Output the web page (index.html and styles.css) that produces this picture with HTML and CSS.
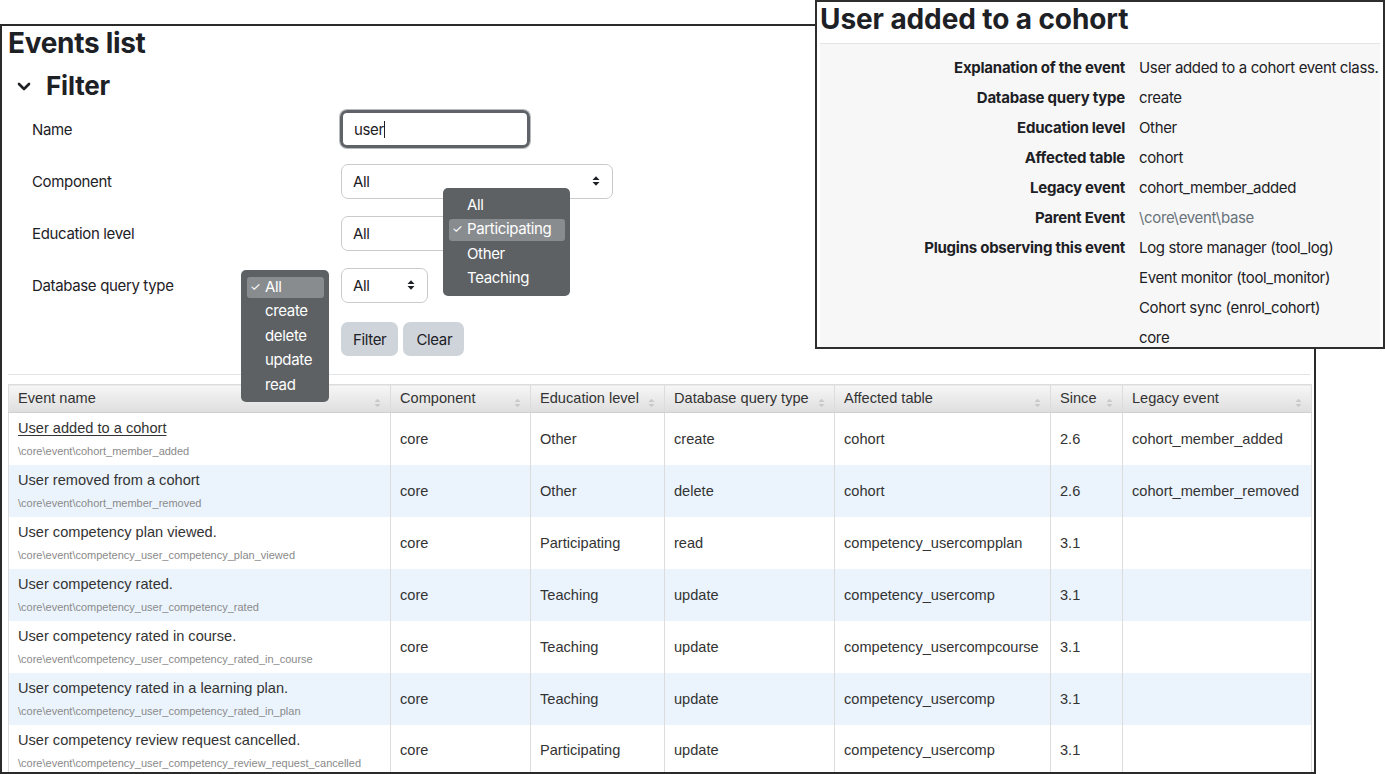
FILE: index.html
```html
<!DOCTYPE html>
<html lang="en">
<head>
<meta charset="utf-8">
<title>Events list</title>
<link rel="stylesheet" href="styles.css">
</head>
<body>
<div class="page">
  <section class="events">
    <h1 class="page-title">Events list</h1>
    <div class="filter-head">
      <svg class="chev" width="14" height="9" viewBox="0 0 14 9"><path d="M2 2 L7 7 L12 2" fill="none" stroke="#1d2125" stroke-width="2.6" stroke-linecap="round" stroke-linejoin="round"/></svg>
      <h2 class="filter-title">Filter</h2>
    </div>
    <form class="filter">
      <div class="row">
        <label class="lbl">Name</label>
        <div class="ctrl"><div class="input focus">user<span class="caret"></span></div></div>
      </div>
      <div class="row">
        <label class="lbl">Component</label>
        <div class="ctrl"><div class="select w-comp"><span>All</span><svg class="updown" width="8" height="12" viewBox="0 0 8 12"><path d="M0.5 5 L4 1.2 L7.5 5 Z M0.5 7 L4 10.8 L7.5 7 Z" fill="#1d2125"/></svg></div></div>
      </div>
      <div class="row">
        <label class="lbl">Education level</label>
        <div class="ctrl anchor">
          <div class="select w-edu"><span>All</span></div>
          <ul class="menu menu-edu">
            <li class="item">All</li>
            <li class="item sel"><span class="tick">✓</span>Participating</li>
            <li class="item">Other</li>
            <li class="item">Teaching</li>
          </ul>
        </div>
      </div>
      <div class="row">
        <label class="lbl">Database query type</label>
        <div class="ctrl anchor">
          <div class="select w-db"><span>All</span><svg class="updown" width="8" height="12" viewBox="0 0 8 12"><path d="M0.5 5 L4 1.2 L7.5 5 Z M0.5 7 L4 10.8 L7.5 7 Z" fill="#1d2125"/></svg></div>
          <ul class="menu menu-db">
            <li class="item sel"><span class="tick">✓</span>All</li>
            <li class="item">create</li>
            <li class="item">delete</li>
            <li class="item">update</li>
            <li class="item">read</li>
          </ul>
        </div>
      </div>
      <div class="row btn-row">
        <span></span>
        <div class="ctrl btns"><button type="button" class="btn">Filter</button><button type="button" class="btn">Clear</button></div>
      </div>
    </form>
    <hr class="rule">
    <table class="grid">
      <colgroup>
        <col style="width:382px"><col style="width:140px"><col style="width:134px"><col style="width:170px"><col style="width:216px"><col style="width:72px"><col style="width:189px">
      </colgroup>
      <thead>
        <tr>
          <th><span>Event name</span><svg class="sort" width="7" height="10" viewBox="0 0 7 10"><path d="M0.5 4 L3.5 0.8 L6.5 4 Z M0.5 6 L3.5 9.2 L6.5 6 Z" fill="#c9c9c9"/></svg></th>
          <th><span>Component</span><svg class="sort" width="7" height="10" viewBox="0 0 7 10"><path d="M0.5 4 L3.5 0.8 L6.5 4 Z M0.5 6 L3.5 9.2 L6.5 6 Z" fill="#c9c9c9"/></svg></th>
          <th><span>Education level</span><svg class="sort" width="7" height="10" viewBox="0 0 7 10"><path d="M0.5 4 L3.5 0.8 L6.5 4 Z M0.5 6 L3.5 9.2 L6.5 6 Z" fill="#c9c9c9"/></svg></th>
          <th><span>Database query type</span><svg class="sort" width="7" height="10" viewBox="0 0 7 10"><path d="M0.5 4 L3.5 0.8 L6.5 4 Z M0.5 6 L3.5 9.2 L6.5 6 Z" fill="#c9c9c9"/></svg></th>
          <th><span>Affected table</span><svg class="sort" width="7" height="10" viewBox="0 0 7 10"><path d="M0.5 4 L3.5 0.8 L6.5 4 Z M0.5 6 L3.5 9.2 L6.5 6 Z" fill="#c9c9c9"/></svg></th>
          <th><span>Since</span><svg class="sort" width="7" height="10" viewBox="0 0 7 10"><path d="M0.5 4 L3.5 0.8 L6.5 4 Z M0.5 6 L3.5 9.2 L6.5 6 Z" fill="#c9c9c9"/></svg></th>
          <th><span>Legacy event</span><svg class="sort" width="7" height="10" viewBox="0 0 7 10"><path d="M0.5 4 L3.5 0.8 L6.5 4 Z M0.5 6 L3.5 9.2 L6.5 6 Z" fill="#c9c9c9"/></svg></th>
        </tr>
      </thead>
      <tbody>
        <tr>
          <td class="name"><a class="ev-link" href="#">User added to a cohort</a><span class="cls">\core\event\cohort_member_added</span></td>
          <td>core</td><td>Other</td><td>create</td><td>cohort</td><td>2.6</td><td>cohort_member_added</td>
        </tr>
        <tr class="alt">
          <td class="name"><span class="ev">User removed from a cohort</span><span class="cls">\core\event\cohort_member_removed</span></td>
          <td>core</td><td>Other</td><td>delete</td><td>cohort</td><td>2.6</td><td>cohort_member_removed</td>
        </tr>
        <tr>
          <td class="name"><span class="ev">User competency plan viewed.</span><span class="cls">\core\event\competency_user_competency_plan_viewed</span></td>
          <td>core</td><td>Participating</td><td>read</td><td>competency_usercompplan</td><td>3.1</td><td></td>
        </tr>
        <tr class="alt">
          <td class="name"><span class="ev">User competency rated.</span><span class="cls">\core\event\competency_user_competency_rated</span></td>
          <td>core</td><td>Teaching</td><td>update</td><td>competency_usercomp</td><td>3.1</td><td></td>
        </tr>
        <tr>
          <td class="name"><span class="ev">User competency rated in course.</span><span class="cls">\core\event\competency_user_competency_rated_in_course</span></td>
          <td>core</td><td>Teaching</td><td>update</td><td>competency_usercompcourse</td><td>3.1</td><td></td>
        </tr>
        <tr class="alt">
          <td class="name"><span class="ev">User competency rated in a learning plan.</span><span class="cls">\core\event\competency_user_competency_rated_in_plan</span></td>
          <td>core</td><td>Teaching</td><td>update</td><td>competency_usercomp</td><td>3.1</td><td></td>
        </tr>
        <tr>
          <td class="name"><span class="ev">User competency review request cancelled.</span><span class="cls">\core\event\competency_user_competency_review_request_cancelled</span></td>
          <td>core</td><td>Participating</td><td>update</td><td>competency_usercomp</td><td>3.1</td><td></td>
        </tr>
      </tbody>
    </table>
  </section>

  <aside class="detail">
    <h2 class="detail-title">User added to a cohort</h2>
    <div class="detail-box">
      <dl class="facts">
        <dt>Explanation of the event</dt><dd>User added to a cohort event class.</dd>
        <dt>Database query type</dt><dd>create</dd>
        <dt>Education level</dt><dd>Other</dd>
        <dt>Affected table</dt><dd>cohort</dd>
        <dt>Legacy event</dt><dd>cohort_member_added</dd>
        <dt>Parent Event</dt><dd class="muted">\core\event\base</dd>
        <dt>Plugins observing this event</dt><dd>Log store manager (tool_log)</dd>
        <dt></dt><dd>Event monitor (tool_monitor)</dd>
        <dt></dt><dd>Cohort sync (enrol_cohort)</dd>
        <dt></dt><dd>core</dd>
      </dl>
    </div>
  </aside>
</div>
</body>
</html>
```
FILE: styles.css
```css
html, body {
  margin: 0;
  padding: 0;
  background: #ffffff;
}
body {
  font-family: "Inter", "Noto Sans", sans-serif;
  color: #1d2125;
  width: 1385px;
  height: 774px;
  overflow: hidden;
}
.page {
  position: relative;
  box-sizing: border-box;
  width: 1385px;
  height: 774px;
  padding-top: 24px;
}

/* ---------- main panel ---------- */
.events {
  position: relative;
  width: 1312px;
  height: 746px;
  border: 2px solid #2a2a2a;
  overflow: hidden;
  background: #fff;
}
.page-title {
  margin: 0;
  padding-left: 6px;
  font-size: 28px;
  line-height: 34px;
  font-weight: 700;
  letter-spacing: -0.3px;
}
.filter-head {
  display: flex;
  align-items: center;
  margin-top: 9px;
  height: 34px;
  padding-left: 15px;
}
.chev {
  margin-top: 1px;
}
.filter-title {
  margin: 0 0 0 15px;
  font-size: 26px;
  line-height: 34px;
  font-weight: 700;
  letter-spacing: -0.2px;
}

/* ---------- filter form ---------- */
.filter {
  padding-left: 30px;
  letter-spacing: -0.35px;
}
.row {
  display: grid;
  grid-template-columns: 309px 1fr;
  align-items: center;
  height: 52px;
}
.lbl {
  font-size: 15px;
  color: #1d2125;
}
.ctrl {
  display: flex;
  align-items: center;
}
.anchor {
  position: relative;
}
.input {
  box-sizing: border-box;
  width: 190px;
  height: 38px;
  border-radius: 7px;
  padding: 0 11px;
  display: flex;
  align-items: center;
  font-size: 15px;
  margin-left: -1px;
}
.focus {
  border: 3px solid #5f6266;
  box-shadow: 0 0 0 1px #b9bcbf;
}
.caret {
  display: inline-block;
  width: 1px;
  height: 17px;
  background: #1d2125;
  margin-left: 0;
}
.select {
  box-sizing: border-box;
  height: 35px;
  border: 1px solid #c8cbce;
  border-radius: 7px;
  display: flex;
  align-items: center;
  justify-content: space-between;
  padding: 0 12px 0 11px;
  font-size: 15px;
  background: #fff;
}
.w-comp { width: 272px; }
.w-edu { width: 190px; }
.w-db { width: 87px; }
.updown { flex: none; }

.menu {
  position: absolute;
  list-style: none;
  margin: 0;
  padding: 5px 0;
  background: #5d6164;
  border-radius: 5px;
  color: #ffffff;
  font-size: 15px;
  z-index: 3;
}
.menu-edu {
  left: 102px;
  top: -28px;
  width: 127px;
}
.menu-db {
  left: -100px;
  top: 2px;
  width: 88px;
}
.item {
  position: relative;
  height: 24.5px;
  line-height: 24.5px;
  padding-left: 24px;
}
.item.sel::before {
  content: "";
  position: absolute;
  left: 6px;
  right: 5px;
  top: 2px;
  bottom: 1px;
  background: #898c8f;
  border-radius: 3px;
  z-index: -1;
}
.item.sel {
  z-index: 0;
}
.tick {
  position: absolute;
  left: 9px;
  font-size: 12px;
}
.btn-row {
  height: auto;
  margin-top: 11px;
}
.btns {
  gap: 5px;
}
.btn {
  box-sizing: border-box;
  height: 34px;
  border: none;
  border-radius: 7px;
  background: #ced4da;
  color: #1d2125;
  font-family: "Inter", "Noto Sans", sans-serif;
  font-size: 15px;
  letter-spacing: -0.35px;
  padding: 0 12px;
}
.btn + .btn {
  padding: 0 12px 0 13px;
}
.rule {
  margin: 18px 4px 0 6px;
  border: 0;
  border-top: 1px solid #e2e4e6;
  height: 0;
}

/* ---------- table ---------- */
.grid {
  margin: 9px 0 0 6px;
  width: 1303px;
  table-layout: fixed;
  border-collapse: collapse;
  font-family: "Liberation Sans", Arial, sans-serif;
  font-size: 14.6px;
  color: #333333;
  border: 1px solid #dcdcdc;
}
.grid th {
  height: 27px;
  padding: 0 9px 0 9px;
  text-align: left;
  font-weight: 400;
  background: linear-gradient(#f6f6f6, #dedede);
  border-left: 1px solid #dcdcdc;
  border-bottom: 1px solid #cfcfcf;
  white-space: nowrap;
  overflow: hidden;
}
.grid th span {
  display: inline-block;
  vertical-align: middle;
}
.sort {
  float: right;
  margin-top: 9px;
}
.grid td {
  height: 52px;
  box-sizing: border-box;
  padding: 0 9px;
  vertical-align: middle;
  border-left: 1px solid #dcdcdc;
  white-space: nowrap;
  overflow: hidden;
}
.grid tr.alt td {
  background: #ebf4fd;
}
.grid td.name {
  padding: 6px 9px 7px 9px;
}
.ev, .ev-link {
  display: block;
  line-height: 18px;
  color: #333333;
}
.ev-link {
  text-decoration: underline;
  text-underline-offset: 2px;
}
.cls {
  display: block;
  margin-top: 8px;
  line-height: 12px;
  font-size: 11px;
  color: #8a8a8a;
}

/* ---------- detail overlay ---------- */
.detail {
  position: absolute;
  left: 815px;
  top: 0;
  width: 566px;
  height: 345px;
  border: 2px solid #2e2e2e;
  background: #ffffff;
  overflow: hidden;
  z-index: 5;
}
.detail-title {
  margin: 0;
  padding-left: 3px;
  font-size: 28px;
  line-height: 34px;
  font-weight: 700;
  letter-spacing: -0.1px;
}
.detail-box {
  margin: 7px 3px 0 3px;
  border-top: 1px solid #e4e4e4;
  background: #f7f7f7;
  padding-top: 9px;
  height: 400px;
}
.facts {
  display: grid;
  grid-template-columns: 305px 1fr;
  column-gap: 14px;
  margin: 0;
  font-size: 15px;
}
.facts dt {
  text-align: right;
  font-weight: 700;
  letter-spacing: -0.25px;
  line-height: 30px;
  white-space: nowrap;
}
.facts dd {
  margin: 0;
  line-height: 30px;
  letter-spacing: -0.35px;
  white-space: nowrap;
}
.muted {
  color: #6a737b;
}
```
